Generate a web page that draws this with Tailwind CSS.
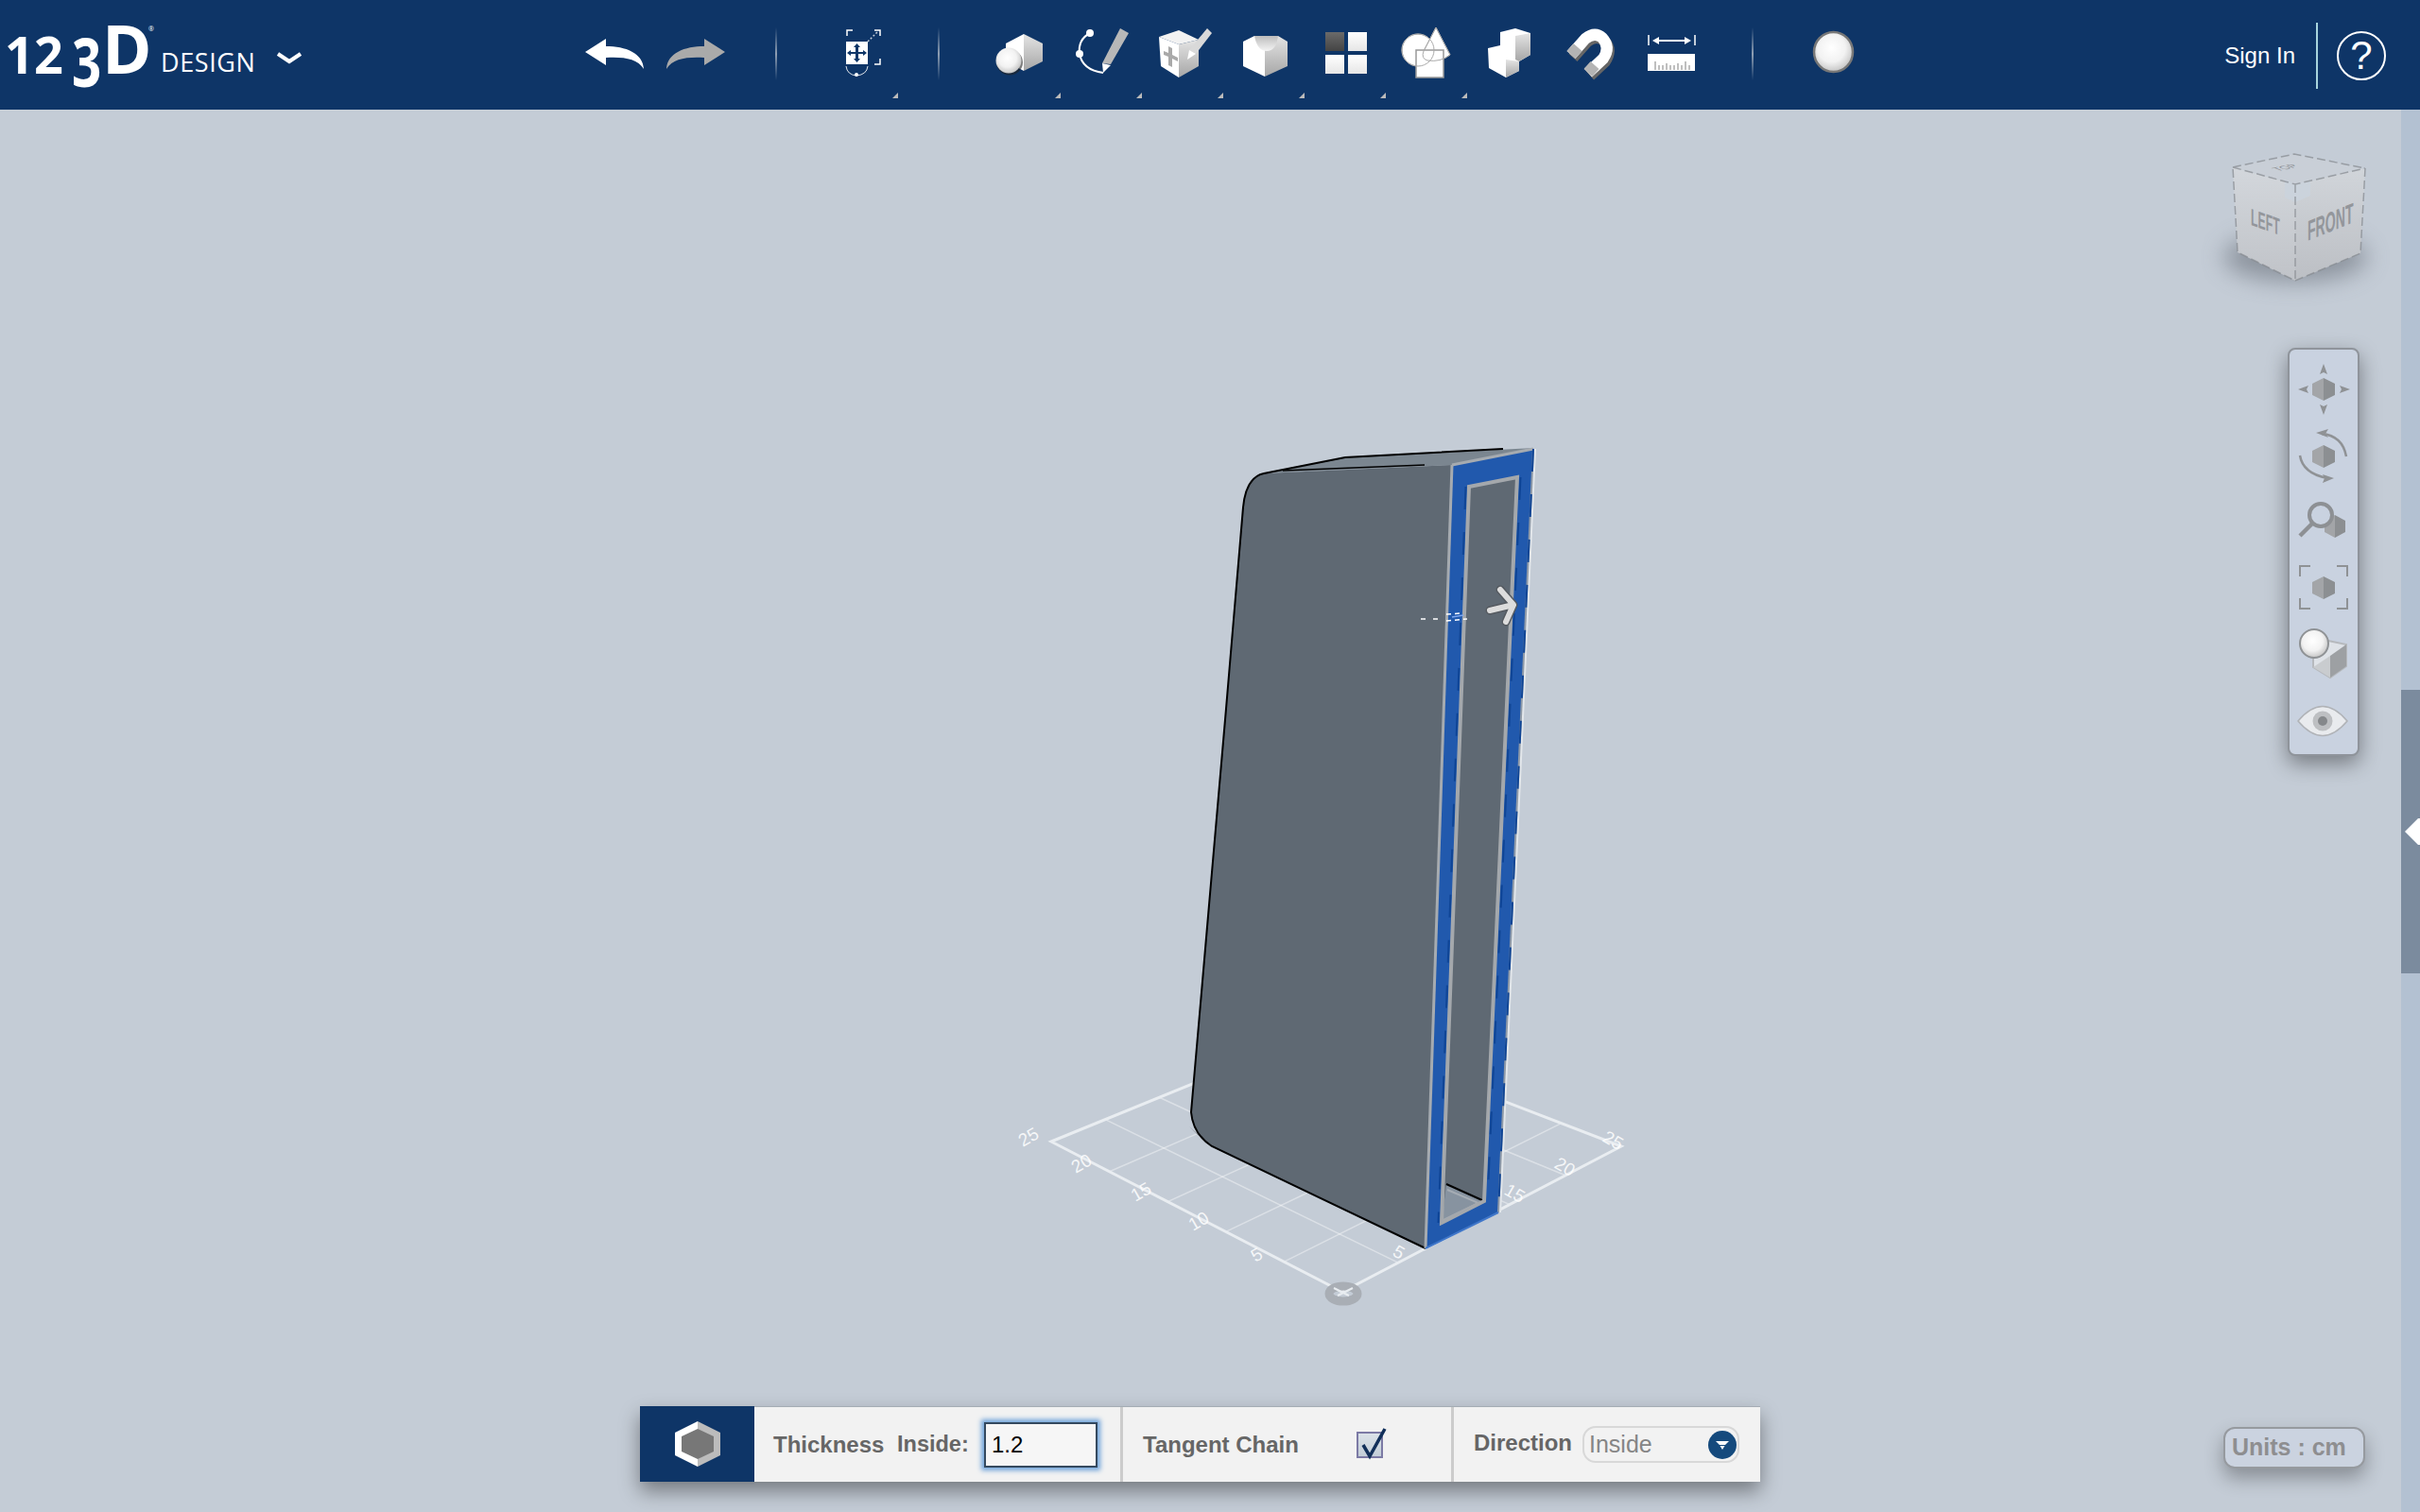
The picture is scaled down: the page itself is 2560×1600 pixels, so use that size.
<!DOCTYPE html>
<html lang="en">
<head>
  <meta charset="UTF-8">
  <script src="https://cdn.jsdelivr.net/npm/@tailwindcss/browser@4"></script>
  <title>123D Design</title>
</head>
<body class="h-screen overflow-hidden flex flex-col bg-[#c4ccd6] font-['Liberation_Sans',Arial,sans-serif]">
  <!-- shared gradients -->
  <svg class="absolute w-0 h-0">
    <defs>
      <linearGradient id="grey" x1="0" y1="0" x2="0" y2="1"><stop offset="0" stop-color="#e4e4e4"/><stop offset="1" stop-color="#a6a6a6"/></linearGradient>
      <linearGradient id="tile" x1="0" y1="0" x2="0" y2="1"><stop offset="0" stop-color="#ffffff"/><stop offset="1" stop-color="#e6e6e6"/></linearGradient>
      <linearGradient id="dark" x1="0" y1="0" x2="0" y2="1"><stop offset="0" stop-color="#6a6a6a"/><stop offset="1" stop-color="#444444"/></linearGradient>
      <linearGradient id="bowl" x1="0" y1="0" x2="0" y2="1"><stop offset="0" stop-color="#bdbdbd"/><stop offset="1" stop-color="#f4f4f4"/></linearGradient>
      <radialGradient id="ball" cx="0.45" cy="0.4" r="0.65"><stop offset="0" stop-color="#ffffff"/><stop offset="0.55" stop-color="#f2f2f2"/><stop offset="1" stop-color="#bcbcbc"/></radialGradient>
      <linearGradient id="cubeL" x1="0" y1="0" x2="0" y2="1"><stop offset="0" stop-color="#d3d7dc"/><stop offset="1" stop-color="#c0c3c8"/></linearGradient>
      <linearGradient id="cubeR" x1="0" y1="0" x2="0" y2="1"><stop offset="0" stop-color="#d1d5da"/><stop offset="1" stop-color="#bcbfc4"/></linearGradient>
    </defs>
  </svg>

  <!-- top bar -->
  <header class="h-[116px] shrink-0 bg-[#0e3567] flex">
    <svg class="w-[340px] h-[116px] shrink-0" viewBox="0 0 340 116" font-family="'Open Sans',sans-serif" fill="#fff">
      <text x="5 36" y="78" font-size="54" font-weight="700">12</text>
      <text transform="translate(76,92) scale(0.76,1)" font-size="72" font-weight="700">3</text>
      <text x="108" y="78" font-size="71" font-weight="700">D</text>
      <text x="157" y="33" font-size="7">®</text>
      <text x="170" y="76" font-size="27" letter-spacing="0.6">DESIGN</text>
      <path d="M294,57 L306,65 L318,57" fill="none" stroke="#fff" stroke-width="4"/>
    </svg>

    <svg class="w-[63px] h-[116px] ml-[279px]" viewBox="619 0 63 116"><path d="M619,55 L641,41 V49 C662,49 680,56 681,73 C674,62 660,60 641,61 V69 Z" fill="#fff"/></svg>
    <svg class="w-[62px] h-[116px] ml-[23px]" viewBox="705 0 62 116"><path d="M767,55 L745,41 V49 C724,49 706,56 705,73 C712,62 726,60 745,61 V69 Z" fill="#aaaaaa"/></svg>
    <div class="w-[2px] h-[56px] mt-[29px] ml-[53px] bg-gradient-to-b from-transparent via-[#8f9fb3] to-transparent"></div>

    <!-- snap -->
    <svg class="w-[60px] h-[116px] ml-[68px]" viewBox="890 0 60 116">
      <path d="M896,38 V32 H902 M925,32 H931 V38 M931,62 V68 H925" fill="none" stroke="#fff" stroke-width="1.5"/>
      <path d="M918,44 L929,33" stroke="#c8d0da" stroke-width="1.5" stroke-dasharray="2 2"/>
      <rect x="895" y="44" width="23" height="24" fill="#fff"/>
      <path d="M906.5,46 L910,50 H908 V55 H913 V53 L917,56 L913,59 V57 H908 V62 H910 L906.5,66 L903,62 H905 V57 H900 V59 L896,56 L900,53 V55 H905 V50 H903 Z" fill="#0e3567"/>
      <path d="M895,70 Q896,79 906,80 Q917,79 918,70" fill="none" stroke="#dfe4ea" stroke-width="1"/>
      <circle cx="906" cy="79" r="2" fill="#fff"/>
      <path d="M950,98 V104 H944 Z" fill="#bbbbbb"/>
    </svg>
    <div class="w-[2px] h-[56px] mt-[29px] ml-[42px] bg-gradient-to-b from-transparent via-[#8f9fb3] to-transparent"></div>

    <!-- primitives -->
    <svg class="w-[72px] h-[116px] ml-[56px]" viewBox="1050 0 72 116">
      <path d="M1083,36 L1064,46 V65 L1083,75 Z" fill="#fff"/>
      <path d="M1083,36 L1103,46 V65 L1083,75 Z" fill="url(#grey)"/>
      <ellipse cx="1068" cy="66" rx="14" ry="13.5" fill="#222" opacity="0.6"/>
      <circle cx="1067" cy="64" r="13.5" fill="url(#ball)"/>
      <path d="M1122,98 V104 H1116 Z" fill="#bbbbbb"/>
    </svg>
    <!-- sketch -->
    <svg class="w-[72px] h-[116px] ml-[14px]" viewBox="1136 0 72 116">
      <path d="M1153,35 Q1140,42 1142,57 Q1145,74 1167,77" fill="none" stroke="#fff" stroke-width="2"/>
      <circle cx="1153" cy="35" r="4" fill="#fff"/>
      <circle cx="1142" cy="57" r="4" fill="#fff"/>
      <path d="M1185,30 L1194,35 L1175,68 L1166,67 Z" fill="#b8b8b8"/>
      <path d="M1166,67 L1175,69 L1167,77 Z" fill="#fff"/>
      <path d="M1208,98 V104 H1202 Z" fill="#bbbbbb"/>
    </svg>
    <!-- construct -->
    <svg class="w-[72px] h-[116px] ml-[14px]" viewBox="1222 0 72 116">
      <path d="M1247,32 L1268,42 L1247,47 L1226,39 Z" fill="#f2f2f2"/>
      <path d="M1226,39 L1247,47 V82 L1228,70 Z" fill="#fff"/>
      <path d="M1247,47 L1268,42 V70 L1247,82 Z" fill="url(#grey)"/>
      <path d="M1236,49 L1240,51 V58 L1246,61 V65 L1240,62 V71 L1236,69 V60 L1231,58 V54 L1236,56 Z" fill="#a9a9a9"/>
      <path d="M1277,30 L1282,35 L1265,57 L1258,53 Z" fill="#d9d9d9"/>
      <path d="M1258,53 L1265,57 L1256,63 Z" fill="#fff"/>
      <path d="M1294,98 V104 H1288 Z" fill="#bbbbbb"/>
    </svg>
    <!-- modify -->
    <svg class="w-[72px] h-[116px] ml-[14px]" viewBox="1308 0 72 116">
      <path d="M1315,44 L1327,38 H1338 V81 L1315,70 Z" fill="#fff"/>
      <path d="M1338,38 H1352 L1362,44 V70 L1338,81 Z" fill="url(#grey)"/>
      <path d="M1327,38 Q1330,54 1340,54 Q1350,54 1352,38 Z" fill="url(#bowl)"/>
      <path d="M1380,98 V104 H1374 Z" fill="#bbbbbb"/>
    </svg>
    <!-- group -->
    <svg class="w-[70px] h-[116px] ml-[16px]" viewBox="1396 0 70 116">
      <rect x="1402" y="34" width="20" height="20" fill="url(#dark)"/>
      <rect x="1426" y="34" width="20" height="20" fill="url(#tile)"/>
      <rect x="1402" y="58" width="20" height="20" fill="url(#tile)"/>
      <rect x="1426" y="58" width="20" height="20" fill="url(#tile)"/>
      <path d="M1466,98 V104 H1460 Z" fill="#bbbbbb"/>
    </svg>
    <!-- combine -->
    <svg class="w-[74px] h-[116px] ml-[12px]" viewBox="1478 0 74 116">
      <circle cx="1500" cy="53" r="17" fill="#fff" stroke="#aaa"/>
      <path d="M1519,29 L1534,58 Q1524,66 1510,64 Q1503,62 1506,54 Z" fill="#fff" stroke="#aaa"/>
      <rect x="1498" y="53" width="29" height="29" fill="#fff" stroke="#999" stroke-width="1.5"/>
      <circle cx="1500" cy="53" r="17" fill="none" stroke="#aaa"/>
      <path d="M1519,29 L1534,58 Q1524,66 1510,64 Q1503,62 1506,54 Z" fill="none" stroke="#aaa"/>
      <path d="M1552,98 V104 H1546 Z" fill="#bbbbbb"/>
    </svg>
    <!-- solid -->
    <svg class="w-[54px] h-[116px] ml-[18px]" viewBox="1570 0 54 116">
      <path d="M1603,30 L1619,35 V58 L1607,65 V75 L1593,82 L1575,72 L1574,51 L1587,48 V34 Z" fill="#fff"/>
      <path d="M1603,38 L1619,35 V58 L1607,65 L1603,63 Z" fill="url(#grey)"/>
      <path d="M1593,63 L1607,65 V75 L1593,82 Z" fill="url(#grey)"/>
    </svg>
    <!-- magnet -->
    <svg class="w-[60px] h-[116px] ml-[28px]" viewBox="1652 0 60 116">
      <path d="M1664,61 L1679,44 Q1689,36 1697,43 Q1706,53 1698,65 L1682,80" fill="none" stroke="#666" stroke-width="12"/>
      <path d="M1662,58 L1677,41 Q1687,33 1695,40 Q1704,50 1696,62 L1680,77" fill="none" stroke="#fff" stroke-width="12"/>
      <path d="M1662,58 L1669,50 M1680,77 L1687,69" fill="none" stroke="#b4b4b4" stroke-width="12"/>
    </svg>
    <!-- measure -->
    <svg class="w-[56px] h-[116px] ml-[28px]" viewBox="1740 0 56 116">
      <path d="M1744,37 V48 M1793,37 V48" stroke="#fff" stroke-width="1.5"/>
      <path d="M1751,43 H1786" stroke="#fff" stroke-width="2"/>
      <path d="M1748,43 L1755,39 V47 Z M1789,43 L1782,39 V47 Z" fill="#fff"/>
      <rect x="1743" y="57" width="50" height="18" fill="#fff"/>
      <path d="M1751,74 V65 M1755,74 V69 M1759,74 V69 M1763,74 V67 M1767,74 V69 M1771,74 V69 M1775,74 V67 M1779,74 V69 M1783,74 V65 M1787,74 V69" stroke="#aaa" stroke-width="1.5"/>
    </svg>
    <div class="w-[2px] h-[56px] mt-[29px] ml-[57px] bg-gradient-to-b from-transparent via-[#8f9fb3] to-transparent"></div>
    <!-- material -->
    <svg class="w-[48px] h-[116px] ml-[61px]" viewBox="1916 0 48 116">
      <ellipse cx="1939.5" cy="55" rx="20.5" ry="21" fill="url(#ball)" stroke="#777" stroke-width="2.5"/>
    </svg>

    <div class="ml-auto flex items-center h-full pt-[2px] pr-[36px]">
      <span class="text-[24px] text-white font-medium">Sign In</span>
      <div class="w-[2px] h-[70px] bg-[#a8d5de] ml-[22px] mr-[20px]"></div>
      <div class="w-[52px] h-[52px] rounded-full border-2 border-white flex items-center justify-center text-[42px] leading-none text-white">?</div>
    </div>
  </header>

  <main class="relative flex-1">
    <!-- viewport -->
    <svg class="absolute inset-0 w-full h-full" viewBox="0 116 2560 1484">
      <!-- view cube -->
      <ellipse cx="2428" cy="272" rx="76" ry="26" fill="#555c66" opacity="0.5" class="blur-[12px]"/>
      <path d="M2362,177 L2428,195 V297 L2367,267 Z" fill="url(#cubeL)"/>
      <path d="M2428,195 L2502,178 L2497,268 L2428,297 Z" fill="url(#cubeR)"/>
      <path d="M2362,177 L2427,163 L2502,178 L2428,195 Z" fill="#c9cfd7"/>
      <path d="M2417,190 L2428,195 L2444,191 V207 L2428,214 L2417,209 Z" fill="#cbd3dc"/>
      <path d="M2362,177 L2427,163 L2502,178 L2497,268 L2428,297 L2367,267 Z M2362,177 L2428,195 L2502,178 M2428,195 V297" fill="none" stroke="#85898f" stroke-opacity="0.7" stroke-width="1.5" stroke-dasharray="9 4"/>
      <text transform="matrix(0.49,0.176,0,1,2381,238)" font-size="25" font-weight="700" fill="#93969b">LEFT</text>
      <text transform="matrix(0.47,-0.19,0,1,2441,255)" font-size="30" font-weight="700" fill="#93969b">FRONT</text>
      <text transform="matrix(0.5,-0.1,0.5,0.2,2410,181)" font-size="22" fill="#8d9095">TOP</text>

      <!-- grid -->
      <g stroke="#fff" stroke-opacity="0.4" stroke-width="1.5">
        <path d="M1358.4,1335.2 L1651.6,1188.6 M1296.8,1303.4 L1588.2,1164.2 M1235.2,1271.6 L1524.8,1139.8 M1173.6,1239.8 L1461.4,1115.4"/>
        <path d="M1479,1336.2 L1169.2,1184.6 M1538,1305.4 L1226.4,1161.2 M1597,1274.6 L1283.6,1137.8 M1656,1243.8 L1340.8,1114.4"/>
      </g>
      <path d="M1398,1091 L1112,1208 L1420,1367 L1715,1213 Z" fill="none" stroke="#e9edf1" stroke-width="3"/>
      <g fill="#fff" fill-opacity="0.85" font-size="19">
        <text transform="translate(1328,1336) rotate(-30)">5</text>
        <text transform="translate(1262,1303) rotate(-30)">10</text>
        <text transform="translate(1201,1272) rotate(-30)">15</text>
        <text transform="translate(1138,1242) rotate(-30)">20</text>
        <text transform="translate(1082,1214) rotate(-30)">25</text>
        <text transform="translate(1472,1328) rotate(30)">5</text>
        <text transform="translate(1590,1263) rotate(30)">15</text>
        <text transform="translate(1643,1235) rotate(30)">20</text>
        <text transform="translate(1694,1207) rotate(30)">25</text>
      </g>
      <ellipse cx="1421" cy="1369" rx="15" ry="8" fill="none" stroke="#a9aeb5" stroke-width="9"/>
      <path d="M1411,1363 L1427,1371 M1431,1363 L1415,1371" stroke="#e9edf1" stroke-width="2"/>

      <!-- model -->
      <path d="M1258,1192 L1282,1213 L1266,1200 Z" fill="#8a8f96"/>
      <path d="M1337,501 L1423,484 L1623,474 L1536,492 Z" fill="#7b8690"/>
      <path d="M1337,501 L1536,492 L1508,1321 L1282,1213 Q1262,1200 1260,1177 L1297,750 L1315,537 Q1318,505 1337,501 Z" fill="#5f6973"/>
      <path d="M1590,475 L1423,484 L1337,501 Q1318,505 1315,537 L1297,750 L1260,1177 Q1262,1200 1282,1213 L1508,1321" fill="none" stroke="#000" stroke-width="2"/>
      <path d="M1357,498 L1507,492" stroke="#000" stroke-width="1.5"/>
      <path d="M1536,492 L1622,475 L1585,1283 L1508,1321 Z" fill="#2159ad"/>
      <path d="M1554,515 L1605,505 L1570,1271 L1525,1294 Z" fill="#5f6973"/>
      <path d="M1530,1253 L1570,1271 L1525,1294 Z" fill="#8793a0"/>
      <path d="M1530,1253 L1570,1271" stroke="#000" stroke-width="2"/>
      <path d="M1531,1259 L1564,1273 L1527,1291" fill="none" stroke="#b2b7bc" stroke-width="2" opacity="0.7"/>
      <path d="M1536,492 L1508,1321" stroke="#a6abb0" stroke-width="3"/>
      <path d="M1536,492 L1622,475" stroke="#a6abb0" stroke-width="3"/>
      <path d="M1554,515 L1605,505 L1570,1271 L1525,1294 Z" fill="none" stroke="#a4a8ac" stroke-width="4"/>
      <path d="M1550.5,515 L1521.5,1294 M1608.5,505 L1573.5,1271" stroke="#0f4596" stroke-width="2" stroke-dasharray="24 24"/>
      <path d="M1622,475 L1585,1283" stroke="#e3e7eb" stroke-width="3" transform="translate(1.5,0)"/>
      <path d="M1622,475 L1585,1283" stroke="#8f9aa8" stroke-width="2"/>
      <path d="M1622,475 L1585,1283" stroke="#0f4596" stroke-width="2" stroke-dasharray="24 24"/>
      <path d="M1585,1283 L1508,1321" stroke="#3f76c9" stroke-width="2"/>
      <path d="M1503,655 H1510 M1516,655 H1522 M1530,650 L1545,649 M1530,657 L1552,655" stroke="#fff" stroke-width="1.5" stroke-dasharray="5 4"/>
      <path d="M1536,653 L1548,651" stroke="#7fa8ee" stroke-width="1.5"/>
      <path d="M1576,646 L1601,640 M1587,624 L1601,640 L1593,658" fill="none" stroke="#555a60" stroke-width="9" stroke-linecap="round" stroke-linejoin="round"/>
      <path d="M1576,646 L1601,640 M1587,624 L1601,640 L1593,658" fill="none" stroke="#dcdcdc" stroke-width="6" stroke-linecap="round" stroke-linejoin="round"/>
    </svg>

    <!-- navigation bar -->
    <div class="absolute left-[2420px] top-[252px] w-[76px] h-[432px] pt-[7px] bg-[#c9d2e0] border-2 border-[#8f949b] rounded-[8px] shadow-[0_8px_22px_rgba(0,0,0,0.4)] flex flex-col">
      <svg class="w-[72px] h-[70px]" viewBox="0 0 72 70">
        <path d="M36,23 L48,29 V41 L36,47 Z" fill="#8c8f92"/><path d="M36,23 L24,29 V41 L36,47 Z" fill="#a3a5a8"/>
        <path d="M36,8 L40,19 L36,17 L32,19 Z M36,62 L40,51 L36,53 L32,51 Z M9,35 L20,31 L18,35 L20,39 Z M64,35 L53,31 L55,35 L53,39 Z" fill="#8f9295"/>
      </svg>
      <svg class="w-[72px] h-[70px]" viewBox="0 0 72 70">
        <path d="M36,24 L48,30 V42 L36,48 Z" fill="#8c8f92"/><path d="M36,24 L24,30 V42 L36,48 Z" fill="#a3a5a8"/>
        <path d="M34,12 Q56,14 60,36 M11,35 Q14,54 40,59" fill="none" stroke="#8f9295" stroke-width="2.5"/>
        <path d="M28,11 L41,7 L38,12 L41,16 Z M47,59 L35,55 L37,59 L35,64 Z" fill="#8f9295"/>
      </svg>
      <svg class="w-[72px] h-[70px]" viewBox="0 0 72 70">
        <path d="M48,28 L59,34 V46 L48,52 Z" fill="#8c8f92"/><path d="M48,28 L37,34 V46 L48,52 Z" fill="#a3a5a8"/>
        <circle cx="33" cy="28" r="12" fill="#c9d2e0" stroke="#8d9094" stroke-width="4"/>
        <path d="M24,37 L11,50" stroke="#8d9094" stroke-width="4.5"/>
      </svg>
      <svg class="w-[72px] h-[70px]" viewBox="0 0 72 70">
        <path d="M36,23 L48,29 V41 L36,47 Z" fill="#8c8f92"/><path d="M36,23 L24,29 V41 L36,47 Z" fill="#a3a5a8"/>
        <path d="M22,12 H11 V23 M50,12 H61 V23 M11,46 V57 H22 M61,46 V57 H50" fill="none" stroke="#8f9295" stroke-width="2"/>
      </svg>
      <svg class="w-[72px] h-[70px]" viewBox="0 0 72 70">
        <path d="M36,20 L60,25 V48 L43,60 L25,49 V30 Z" fill="#dfe3e8" stroke="#b6b9bd" stroke-width="2"/>
        <path d="M43,37 L60,25 V48 L43,60 Z" fill="#9da0a3"/>
        <path d="M25,49 L43,37 V60 Z" fill="#c9cccf"/>
        <circle cx="26" cy="24" r="15" fill="url(#ball)" stroke="#8f9295" stroke-width="2"/>
      </svg>
      <svg class="w-[72px] h-[70px]" viewBox="0 0 72 70">
        <path d="M9,36 Q35,5 61,36 Q35,67 9,36 Z" fill="#e9ebee" stroke="#b0b3b7" stroke-width="1.5"/>
        <circle cx="35" cy="36" r="10.5" fill="#bdbfc2"/>
        <circle cx="35" cy="36" r="5" fill="#85888b"/>
      </svg>
    </div>

    <!-- side panel strip -->
    <div class="absolute right-0 top-0 bottom-0 w-[20px] bg-[#b3c1d2]">
      <div class="mt-[614px] h-[300px] bg-[#7b8b9e] flex items-center">
        <svg class="w-[20px] h-[30px]" viewBox="0 0 20 30"><path d="M4,15 L18,1 H20 V29 H18 Z" fill="#fff"/></svg>
      </div>
    </div>

    <!-- shell options -->
    <div class="absolute left-[677px] top-[1372px] w-[1185px] h-[80px] flex bg-[#f2f2f2] border-t border-[#a6adb5] shadow-[0_10px_20px_rgba(0,0,0,0.4)] text-[#666666] font-bold text-[24px]">
      <div class="w-[121px] -mt-px bg-[#0e3567] flex items-center justify-center">
        <svg class="w-[50px] h-[50px]" viewBox="0 0 50 50">
          <path d="M25,1 L1,13 V37 L25,49 Z" fill="#fff"/>
          <path d="M25,1 L49,13 V37 L25,49 Z" fill="#bcbcbc"/>
          <path d="M25,9 L42,17 V33 L25,41 L8,33 V17 Z" fill="#777777"/>
        </svg>
      </div>
      <div class="w-[387px] flex items-center pl-[20px]">
        <span class="w-[131px]">Thickness</span>
        <span class="w-[92px] whitespace-nowrap text-[23.5px]">Inside:</span>
        <input class="w-[120px] h-[48px] px-[6px] bg-[#f6f6f6] border-2 border-[#34495f] text-[24px] font-normal text-black shadow-[0_0_5px_3px_#6fa3da] outline-none" type="text" value="1.2">
      </div>
      <div class="w-[3px] bg-[#cccccc]"></div>
      <div class="w-[347px] flex items-center pl-[21px]">
        <span class="w-[226px]">Tangent Chain</span>
        <span class="relative w-[28px] h-[28px] border-2 border-[#7c7aa5] bg-gradient-to-b from-[#dbe2e8] to-[#c3ced8]">
          <svg class="absolute left-[3px] -top-[6px] w-[30px] h-[34px] overflow-visible" viewBox="0 0 30 34"><path d="M2,18 L9,30 L25,1" fill="none" stroke="#12305a" stroke-width="3.5"/></svg>
        </span>
      </div>
      <div class="w-[3px] bg-[#cccccc]"></div>
      <div class="flex-1 flex items-center pl-[21px]">
        <span class="w-[115px] text-[24px] -mt-[3px]">Direction</span>
        <div class="w-[166px] h-[39px] flex items-center pl-[5px] pr-px border-2 border-[#d8d8d8] rounded-[14px]">
          <span class="text-[25px] font-normal text-[#858585]">Inside</span>
          <svg class="ml-auto w-[30px] h-[30px]" viewBox="0 0 30 30">
            <circle cx="15" cy="15" r="15" fill="#154a7d"/>
            <path d="M8,11 H22 L18,15 H12 Z M12.5,16 H17.5 L15,20 Z" fill="#fff"/>
          </svg>
        </div>
      </div>
    </div>

    <!-- units -->
    <div class="absolute left-[2352px] top-[1394px] w-[150px] h-[44px] pl-[7px] flex items-center bg-[#cbd3e0] border-2 border-[#969a9f] rounded-[12px] shadow-[0_10px_20px_rgba(0,0,0,0.3)] text-[25px] font-bold text-[#8e8e90]">Units : cm</div>
  </main>
</body>
</html>
